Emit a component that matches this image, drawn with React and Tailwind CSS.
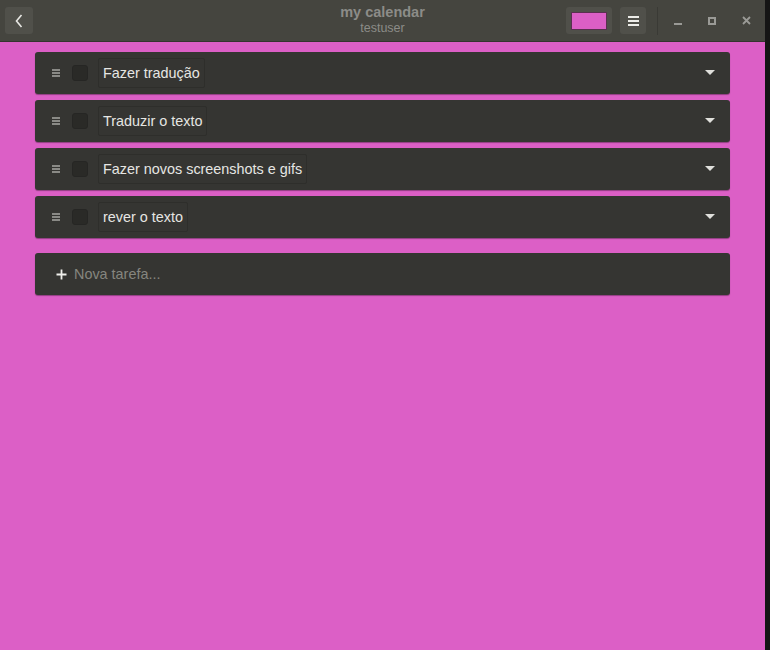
import React from 'react'

const tasks = ['Fazer tradução', 'Traduzir o texto', 'Fazer novos screenshots e gifs', 'rever o texto']

const DragIcon = () => (
  <svg width="8" height="8" viewBox="0 0 8 8" className="shrink-0">
    <rect x="0" y="0" width="8" height="2" fill="#8a8a86" />
    <rect x="0" y="3" width="8" height="2" fill="#8a8a86" />
    <rect x="0" y="6" width="8" height="2" fill="#8a8a86" />
  </svg>
)

const TaskRow = ({ title }) => (
  <div className="h-[42px] rounded-[3px] bg-[#353532] shadow-[0_1px_1px_rgba(0,0,0,0.35)] flex items-center pl-[17px] pr-[15px]">
    <DragIcon />
    <div className="ml-[12px] w-[16px] h-[16px] rounded-[3px] bg-[#2a2a27] border border-[#262624]" />
    <div className="ml-[10px] h-[30px] px-[4px] pt-[2px] flex items-center border border-[#2e2e2b] rounded-[2px] text-[14.4px] text-[#e6e6e3]">
      {title}
    </div>
    <div className="flex-1" />
    <svg width="10" height="6" viewBox="0 0 10 6">
      <path d="M0 0 L10 0 L5 5 Z" fill="#e0e0dc" />
    </svg>
  </div>
)

export default function App() {
  return (
    <div className="w-[770px] h-[650px] flex bg-[#151515]" style={{ fontFamily: '"Liberation Sans", Arial, sans-serif' }}>
      <div className="w-[765px] h-full flex flex-col bg-[#dc5fc6]">
        <div className="h-[42px] shrink-0 bg-[#45453f] border-b border-[#34342f] flex items-center px-[5px] relative">
          <button className="w-[28px] h-[27px] rounded-[3px] bg-[#50504a] flex items-center justify-center">
            <svg width="8" height="14" viewBox="0 0 8 14">
              <path d="M6.5 1 L1.5 7 L6.5 13" stroke="#e8e8e4" strokeWidth="1.6" fill="none" />
            </svg>
          </button>
          <div className="absolute left-0 right-0 top-[5px] flex flex-col items-center leading-none pointer-events-none">
            <div className="text-[14.5px] font-bold text-[#8c8c88]">my calendar</div>
            <div className="text-[12.5px] text-[#8c8c88] mt-[2px]">testuser</div>
          </div>
          <div className="flex-1" />
          <button className="w-[46px] h-[27px] rounded-[3px] bg-[#50504a] flex items-center justify-center">
            <div className="w-[36px] h-[18px] bg-[#dc5fc6] border border-[#5a3050]" />
          </button>
          <button className="ml-[8px] w-[26px] h-[27px] rounded-[3px] bg-[#50504a] flex items-center justify-center">
            <svg width="11" height="10" viewBox="0 0 11 10">
              <rect x="0" y="0" width="11" height="2" fill="#ecece8" />
              <rect x="0" y="4" width="11" height="2" fill="#ecece8" />
              <rect x="0" y="8" width="11" height="2" fill="#ecece8" />
            </svg>
          </button>
          <div className="ml-[11px] w-px h-[28px] bg-[#3a3a35]" />
          <div className="ml-[10px] w-[20px] flex items-center justify-center">
            <svg width="8" height="8" viewBox="0 0 8 8">
              <rect x="0" y="6" width="8" height="2" fill="#9a9a96" />
            </svg>
          </div>
          <div className="ml-[14px] w-[20px] flex items-center justify-center">
            <svg width="8" height="8" viewBox="0 0 8 8">
              <rect x="1" y="1" width="6" height="6" stroke="#9a9a96" strokeWidth="2" fill="none" />
            </svg>
          </div>
          <div className="ml-[14px] mr-[4px] w-[20px] flex items-center justify-center">
            <svg width="9" height="9" viewBox="0 0 9 9">
              <path d="M1 1 L8 8 M8 1 L1 8" stroke="#9a9a96" strokeWidth="1.8" />
            </svg>
          </div>
        </div>
        <div className="px-[35px] pt-[10px] flex flex-col gap-[6px]">
          {tasks.map((t) => (
            <TaskRow key={t} title={t} />
          ))}
          <div className="mt-[9px] h-[42px] rounded-[3px] bg-[#353532] shadow-[0_1px_1px_rgba(0,0,0,0.35)] flex items-center pl-[21px]">
            <svg width="11" height="11" viewBox="0 0 11 11">
              <path d="M5.5 0.5 V10.5 M0.5 5.5 H10.5" stroke="#f0f0ec" strokeWidth="1.8" />
            </svg>
            <span className="ml-[7px] pt-[2px] text-[14.4px] text-[#86867f]">Nova tarefa...</span>
          </div>
        </div>
      </div>
    </div>
  )
}
